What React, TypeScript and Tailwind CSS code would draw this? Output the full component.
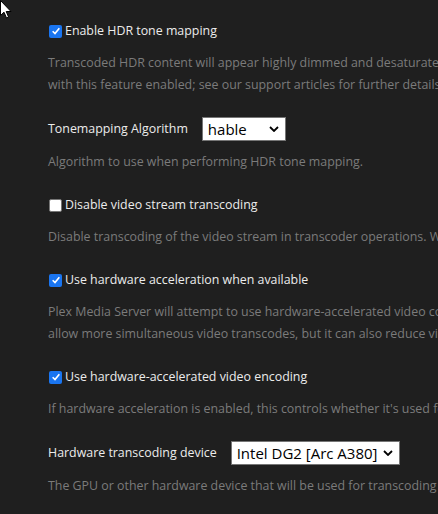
import { ReactNode } from "react";

const font = { fontFamily: '"Open Sans", "Noto Sans", sans-serif' };

function Checkbox({ checked }: { checked: boolean }) {
  if (checked) {
    return (
      <span className="mr-[3px] grid h-[13px] w-[13px] shrink-0 place-items-center rounded-[2px] bg-[#1a75f0]">
        <svg viewBox="0 0 12 12" className="h-[10px] w-[10px]">
          <path d="M2 6.3 L4.8 9 L10 2.8" fill="none" stroke="white" strokeWidth="2" />
        </svg>
      </span>
    );
  }
  return <span className="mr-[3px] h-[13px] w-[13px] shrink-0 rounded-[2px] border border-[#767676] bg-white" />;
}

function Select({ value, width }: { value: string; width: string }) {
  return (
    <span
      className={`flex h-[24px] items-center justify-between border border-[#767676] bg-white pl-[5px] pr-[6px] text-[15px] text-black ${width}`}
    >
      <span className="leading-none">{value}</span>
      <svg viewBox="0 0 10 6" className="ml-1 h-[6px] w-[10px]">
        <path d="M1 1 L5 5 L9 1" fill="none" stroke="black" strokeWidth="1.8" />
      </svg>
    </span>
  );
}

function Setting({ label, children }: { label: ReactNode; children: ReactNode }) {
  return (
    <div className="mb-[21px]">
      {label}
      <div className="-ml-px mt-[10px] whitespace-nowrap text-[12.4px] leading-[22px] text-[#7b7b7b]">{children}</div>
    </div>
  );
}

function CheckRow({ checked, text }: { checked: boolean; text: string }) {
  return (
    <div className="flex h-[22px] items-center text-[12.4px] leading-[22px] text-[#ececec]">
      <Checkbox checked={checked} />
      <span>{text}</span>
    </div>
  );
}

function SelectRow({ text, value, width }: { text: string; value: string; width: string }) {
  return (
    <div className="-ml-px flex h-[24px] items-center gap-[14px] text-[12.4px] leading-[22px] text-[#ececec]">
      <span>{text}</span>
      <Select value={value} width={width} />
    </div>
  );
}

export default function App() {
  return (
    <div className="relative h-[514px] w-[438px] overflow-hidden bg-[#1f1f1f] pl-[49px] pt-[20px]" style={font}>
      <Setting label={<CheckRow checked text="Enable HDR tone mapping" />}>
        <div>Transcoded HDR content will appear highly dimmed and desaturated when played</div>
        <div>with this feature enabled; see our support articles for further details.</div>
      </Setting>
      <Setting label={<SelectRow text="Tonemapping Algorithm" value="hable" width="w-[84px]" />}>
        <div>Algorithm to use when performing HDR tone mapping.</div>
      </Setting>
      <Setting label={<CheckRow checked={false} text="Disable video stream transcoding" />}>
        <div>Disable transcoding of the video stream in transcoder operations. When</div>
      </Setting>
      <Setting label={<CheckRow checked text="Use hardware acceleration when available" />}>
        <div>Plex Media Server will attempt to use hardware-accelerated video codecs</div>
        <div>allow more simultaneous video transcodes, but it can also reduce video</div>
      </Setting>
      <Setting label={<CheckRow checked text="Use hardware-accelerated video encoding" />}>
        <div>If hardware acceleration is enabled, this controls whether it's used for</div>
      </Setting>
      <Setting label={<SelectRow text="Hardware transcoding device" value="Intel DG2 [Arc A380]" width="w-[169px]" />}>
        <div>The GPU or other hardware device that will be used for transcoding</div>
      </Setting>

      {/* mouse pointer */}
      <svg viewBox="0 0 12 19" className="absolute left-0 top-0 h-[19px] w-[12px]">
        <path d="M0.5 0.5 L0.5 15.5 L4 12.2 L6.5 18 L8.6 17.1 L6.2 11.5 L11 11.5 Z" fill="white" stroke="black" strokeWidth="1" />
      </svg>
    </div>
  );
}
